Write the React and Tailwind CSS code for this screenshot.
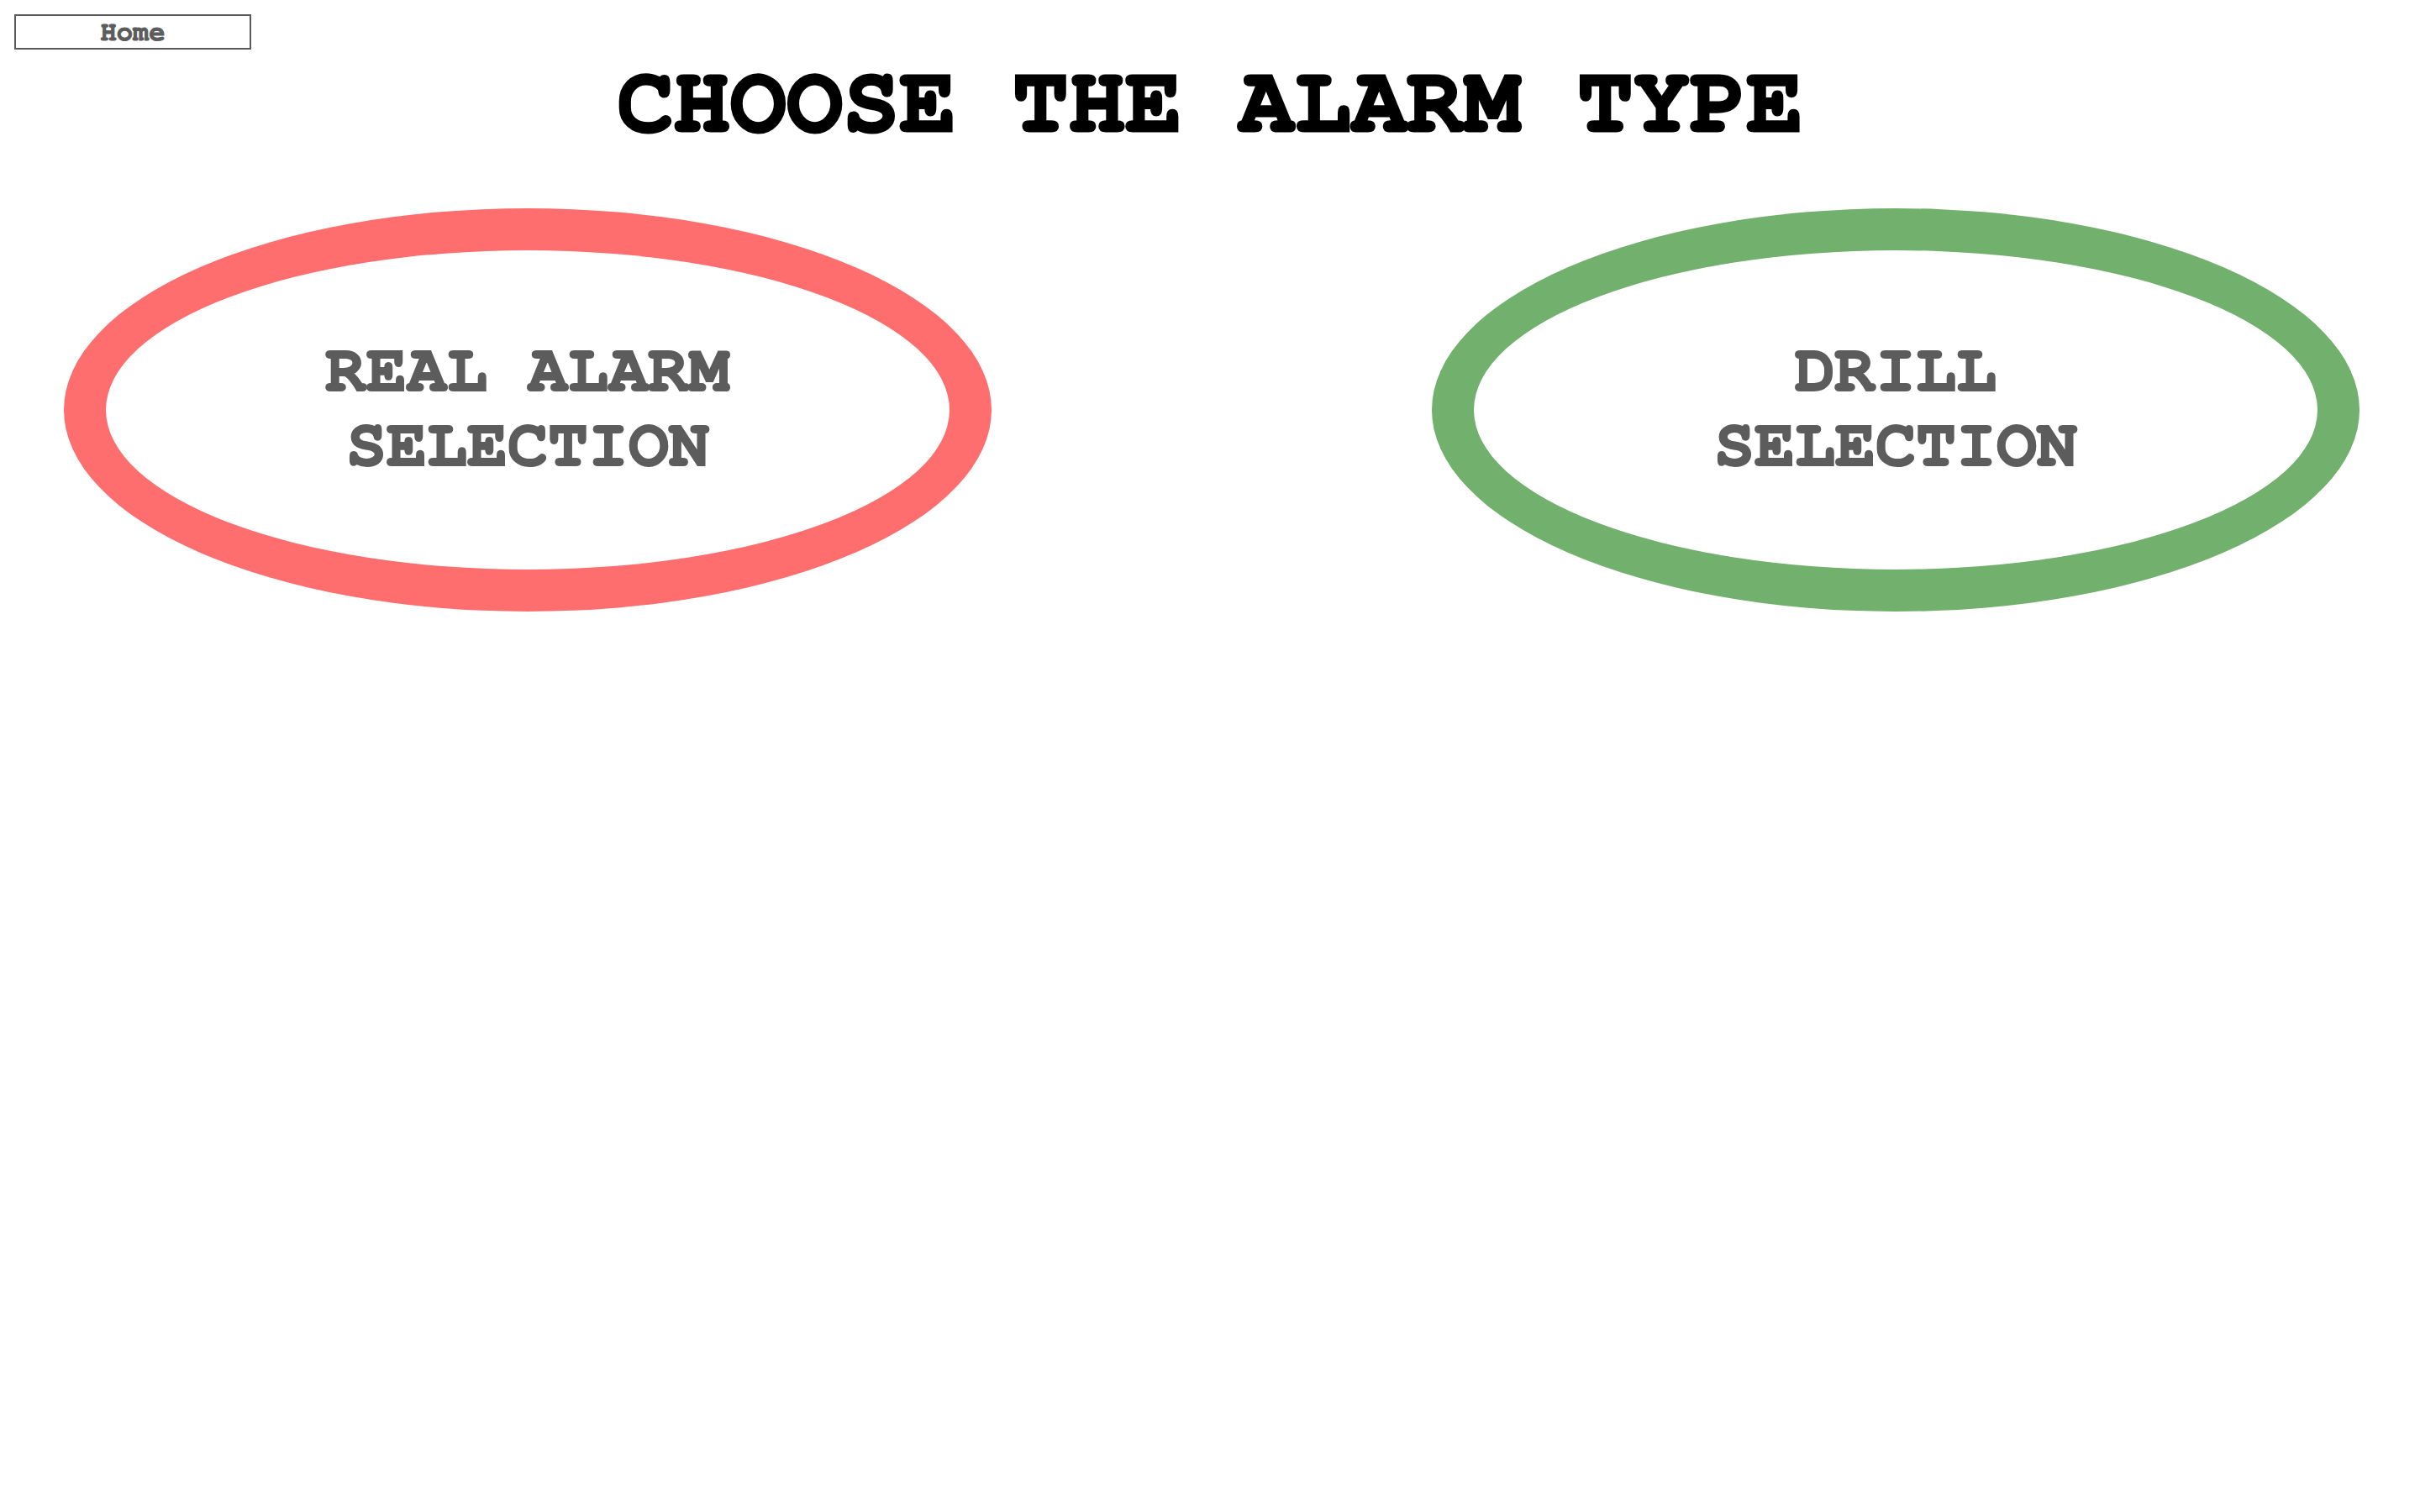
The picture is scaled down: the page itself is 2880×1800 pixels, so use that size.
const options = [
    { label: ["REAL ALARM", "SELECTION"], ring: "border-[#ff6e6e]" },
    { label: ["DRILL", "SELECTION"], ring: "border-[#72b06e]" }
];

const App = () => {
    return (
        <div className="min-h-screen bg-white font-['Nimbus_Mono_PS','Courier_10_Pitch','FreeMono','Liberation_Mono',monospace]">
            <div className="pt-[17px] pl-[17px]">
                <button className="w-[282px] h-[42px] border-2 border-[#5a5a5a] bg-white text-[32px] leading-none font-bold text-[#5c5c5c] [-webkit-text-stroke:1px_#5c5c5c]">
                    Home
                </button>
            </div>

            <h1 className="mt-[2px] text-center text-[112px] leading-[1.1] font-bold text-black [-webkit-text-stroke:3px_#000]">
                CHOOSE THE ALARM TYPE
            </h1>

            {/* alarm options */}
            <div className="mt-[64px] flex justify-between pl-[76px] pr-[72px]">
                {options.map((opt) => (
                    <div
                        key={opt.label[0]}
                        className={`w-[1104px] h-[480px] rounded-[50%] border-[50px] ${opt.ring} flex flex-col items-center justify-center pb-[4px] cursor-pointer`}
                    >
                        {opt.label.map((line) => (
                            <span key={line} className="text-[80px] font-bold text-[#5c5c5c] leading-[89px] [-webkit-text-stroke:2px_#5c5c5c]">
                                {line}
                            </span>
                        ))}
                    </div>
                ))}
            </div>
        </div>
    );
};

export default App;
